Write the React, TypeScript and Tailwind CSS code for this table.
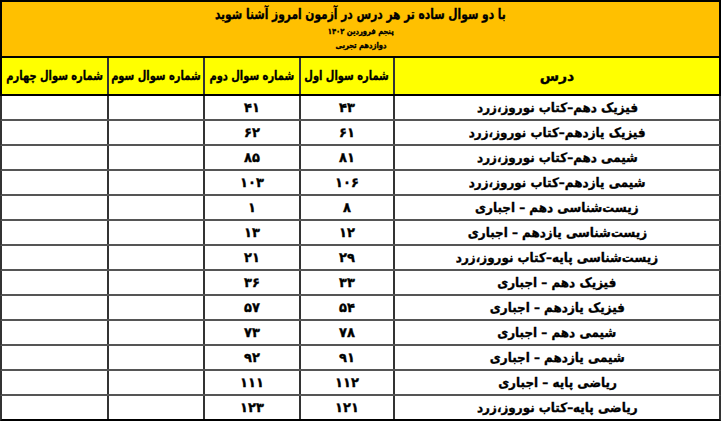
import React from "react";

const rows: [string, string, string][] = [
  ["فیزیک دهم–کتاب نوروز،زرد", "۴۳", "۴۱"],
  ["فیزیک یازدهم–کتاب نوروز،زرد", "۶۱", "۶۲"],
  ["شیمی دهم–کتاب نوروز،زرد", "۸۱", "۸۵"],
  ["شیمی یازدهم–کتاب نوروز،زرد", "۱۰۶", "۱۰۳"],
  ["زیست‌شناسی دهم – اجباری", "۸", "۱"],
  ["زیست‌شناسی یازدهم – اجباری", "۱۲", "۱۳"],
  ["زیست‌شناسی پایه–کتاب نوروز،زرد", "۲۹", "۲۱"],
  ["فیزیک دهم – اجباری", "۳۳", "۳۶"],
  ["فیزیک یازدهم – اجباری", "۵۴", "۵۷"],
  ["شیمی دهم – اجباری", "۷۸", "۷۳"],
  ["شیمی یازدهم – اجباری", "۹۱", "۹۲"],
  ["ریاضی پایه – اجباری", "۱۱۲", "۱۱۱"],
  ["ریاضی پایه–کتاب نوروز،زرد", "۱۲۱", "۱۲۳"],
];

const font = { fontFamily: '"DejaVu Sans", sans-serif' };

function H({ children }: { children: React.ReactNode }) {
  return <span className="inline-block scale-x-[0.76] whitespace-nowrap">{children}</span>;
}

export default function App() {
  return (
    <div
      dir="rtl"
      className="w-[721px] h-[423px] bg-white text-black font-bold overflow-hidden [-webkit-text-stroke:0.35px_black]"
      style={font}
    >
      <div className="h-[58px] bg-[#ffc000] border-2 border-black flex flex-col items-center">
        <div className="text-[14px] leading-[18px] mt-[3px] whitespace-nowrap inline-block scale-x-[0.76]">با دو سوال ساده تر هر درس در آزمون امروز آشنا شوید</div>
        <div className="text-[8px] leading-[11px] mt-[3px] whitespace-nowrap inline-block scale-x-[0.85]">پنجم فروردین ۱۴۰۲</div>
        <div className="text-[8px] leading-[11px] mt-[3px] whitespace-nowrap inline-block scale-x-[0.85]">دوازدهم تجربی</div>
      </div>
      <div className="h-[38px] bg-[#ffff00] border-x-2 border-b-2 border-black flex text-[13px] whitespace-nowrap">
        <div className="w-[326px] border-l-2 border-[#333] flex items-center justify-center text-[14px]">درس</div>
        <div className="w-[94px] border-l-2 border-[#333] flex items-center justify-center"><H>شماره سوال اول</H></div>
        <div className="w-[96px] border-l-2 border-[#333] flex items-center justify-center"><H>شماره سوال دوم</H></div>
        <div className="w-[96px] border-l-2 border-[#333] flex items-center justify-center"><H>شماره سوال سوم</H></div>
        <div className="w-[105px] flex items-center justify-center"><H>شماره سوال چهارم</H></div>
      </div>
      {rows.map((r, i) => (
        <div
          key={i}
          className={`h-[25px] border-x-2 border-[#333] flex ${
            i === rows.length - 1 ? "border-b-2 border-b-black" : "border-b-2 border-b-[#555]"
          }`}
        >
          <div className="w-[326px] border-l-2 border-[#333] flex items-center justify-center text-[13px]">
            <span className="inline-block scale-x-[0.92] whitespace-nowrap">{r[0]}</span>
          </div>
          <div className="w-[94px] border-l-2 border-[#333] flex items-center justify-center text-[13px]">{r[1]}</div>
          <div className="w-[96px] border-l-2 border-[#333] flex items-center justify-center text-[13px]">{r[2]}</div>
          <div className="w-[96px] border-l-2 border-[#333]"></div>
          <div className="w-[105px]"></div>
        </div>
      ))}
    </div>
  );
}
